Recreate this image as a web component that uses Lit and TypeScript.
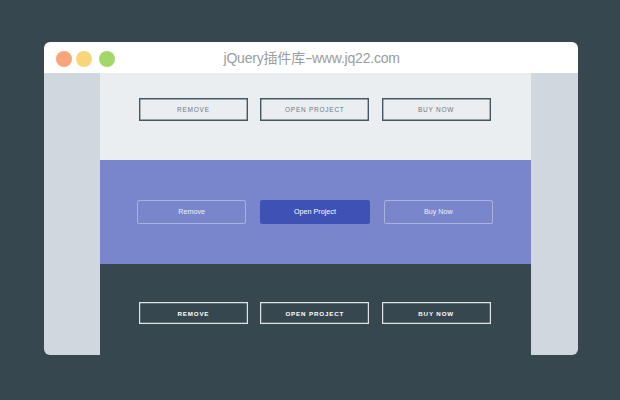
import { LitElement, html, css } from "lit";
import { customElement, property } from "lit/decorators.js";

@customElement("button-row")
class ButtonRow extends LitElement {
  @property({ reflect: true }) theme = "light";

  static styles = css`
    :host { display: flex; box-sizing: border-box; padding-left: 39px; gap: 12.2px; align-items: flex-start; }
    .btn {
      box-sizing: border-box; width: 109.2px; height: 23px; padding: 0; margin: 0;
      display: flex; align-items: center; justify-content: center;
      border: 0; background: transparent; white-space: nowrap;
      font: 400 6.5px/10px "Liberation Sans", Arial, sans-serif;
      letter-spacing: 0.75px; text-transform: uppercase;
    }
    :host([theme="light"]) { background: #ebeef1; padding-top: 25px; }
    :host([theme="light"]) .btn { color: #70787c; padding-top: 1px; box-shadow: inset 0 0 0 1.4px #455762; }
    :host([theme="indigo"]) { background: #7986cb; padding-top: 40px; padding-left: 37px; gap: 13.8px; }
    :host([theme="indigo"]) .btn {
      width: 109.6px; height: 24px; border-radius: 2.5px; color: #eef0fa;
      font-size: 7.2px; letter-spacing: 0; text-transform: none;
      box-shadow: inset 0 0 0 1px #a9b2df;
    }
    :host([theme="indigo"]) .primary { background: #3f51b5; color: #fff; box-shadow: none; }
    :host([theme="dark"]) { background: #37474f; padding-top: 38.7px; }
    :host([theme="dark"]) .btn {
      height: 22px; color: #fff; font-weight: 700; font-size: 6.2px; letter-spacing: 0.85px;
      padding-top: 1px; box-shadow: inset 0 0 0 1.2px #dfe3e5;
    }
  `;

  render() {
    return html`
      <button class="btn">Remove</button>
      <button class="btn primary">Open Project</button>
      <button class="btn">Buy Now</button>
    `;
  }
}

@customElement("app-root")
class AppRoot extends LitElement {
  static styles = css`
    :host {
      display: block; box-sizing: border-box; width: 620px; height: 400px;
      padding: 42.3px 0 0 43.5px; background: #37474f; overflow: hidden;
    }
    .window {
      width: 534.9px; height: 312.4px; border-radius: 6px; overflow: hidden;
      display: grid; grid-template-rows: 31px 1fr;
    }
    .bar {
      background: #fff; display: grid; grid-template-columns: 180px auto 1fr;
      align-items: center;
    }
    .dots { display: flex; padding: 2px 0 0 12.5px; }
    .dot { width: 16px; height: 16px; border-radius: 50%; }
    .close { background: #f9a57a; }
    .min { background: #f8d579; margin-left: 4.3px; }
    .max { background: #a3d869; margin-left: 6.4px; }
    .title {
      font: 400 14px/20px "Liberation Sans", "Noto Sans CJK SC", sans-serif;
      letter-spacing: -0.2px;
      color: #999d9e; white-space: nowrap; padding-top: 1px;
    }
    .dash { display: inline-block; width: 7px; letter-spacing: 0; transform: scaleX(1.6); transform-origin: 0 50%; }
    .body { display: grid; grid-template-columns: 56.3px 430.9px 1fr; background: #d0d7de; }
    .stage { display: grid; grid-template-rows: 87px 103.3px 1fr; grid-column: 2; }
  `;

  render() {
    return html`
      <div class="window">
        <div class="bar">
          <div class="dots">
            <span class="dot close"></span><span class="dot min"></span><span class="dot max"></span>
          </div>
          <div class="title">jQuery插件库<span class="dash">-</span>www.jq22.com</div>
        </div>
        <div class="body">
          <div class="stage">
            <button-row theme="light"></button-row>
            <button-row theme="indigo"></button-row>
            <button-row theme="dark"></button-row>
          </div>
        </div>
      </div>
    `;
  }
}
